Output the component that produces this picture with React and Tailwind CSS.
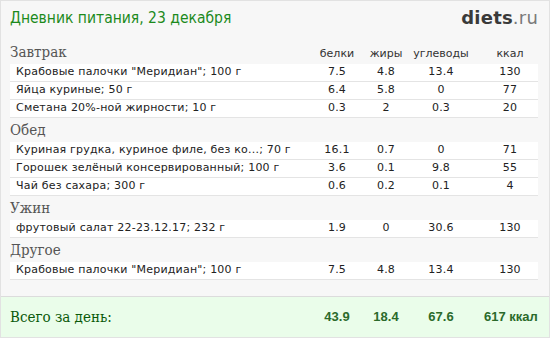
import React from 'react';

const sections = [
  {
    title: 'Завтрак',
    items: [
      ['Крабовые палочки "Меридиан"; 100 г', '7.5', '4.8', '13.4', '130'],
      ['Яйца куриные; 50 г', '6.4', '5.8', '0', '77'],
      ['Сметана 20%-ной жирности; 10 г', '0.3', '2', '0.3', '20'],
    ],
  },
  {
    title: 'Обед',
    items: [
      ['Куриная грудка, куриное филе, без ко...; 70 г', '16.1', '0.7', '0', '71'],
      ['Горошек зелёный консервированный; 100 г', '3.6', '0.1', '9.8', '55'],
      ['Чай без сахара; 300 г', '0.6', '0.2', '0.1', '4'],
    ],
  },
  {
    title: 'Ужин',
    items: [['фрутовый салат 22-23.12.17; 232 г', '1.9', '0', '30.6', '130']],
  },
  {
    title: 'Другое',
    items: [['Крабовые палочки "Меридиан"; 100 г', '7.5', '4.8', '13.4', '130']],
  },
];

const cols = 'grid grid-cols-[1fr_52px_46px_75px_54px]';

const Cells = ({ values }) => (
  <>
    <div className="text-center">{values[0]}</div>
    <div className="text-center">{values[1]}</div>
    <div className="text-center pr-[11px]">{values[2]}</div>
    <div className="text-center pr-[2px]">{values[3]}</div>
  </>
);

export default function App() {
  return (
    <div className="w-[550px] h-[338px] bg-[#f7f7f7] border border-[#e2e2e2] flex flex-col overflow-hidden">
      <div className="h-[39px] flex items-start justify-between pl-[9px] pr-[11px] pt-[6px]">
        <h1 className="text-[15.5px] leading-[22px] text-[#1c8a1c] font-['DejaVu_Sans_Condensed','DejaVu_Sans',sans-serif]">
          Дневник питания, 23 декабря
        </h1>
        <div className="text-[18px] leading-[22px] tracking-[0.2px] font-['DejaVu_Sans',sans-serif]">
          <span className="font-bold text-[#3a3a3a]">diets</span>
          <span className="text-[#7a7a7a]">.ru</span>
        </div>
      </div>

      <div className="pl-[9px] pr-[11px] flex-1">
        {sections.map((s, si) => (
          <div key={s.title}>
            <div className={`${cols} h-[24px] items-end pb-[3px]`}>
              <div className="text-[15px] leading-[18px] text-[#555] font-['DejaVu_Serif_Condensed','DejaVu_Serif',serif]">
                {s.title}
              </div>
              {si === 0 && (
                <div className="contents text-[11px] leading-[15px] text-[#333] font-['DejaVu_Sans',sans-serif]">
                  <div className="text-center text-[11px] leading-[15px] text-[#333] font-['DejaVu_Sans',sans-serif]">белки</div>
                  <div className="text-center text-[11px] leading-[15px] text-[#333] font-['DejaVu_Sans',sans-serif]">жиры</div>
                  <div className="text-center pr-[11px] text-[11px] leading-[15px] text-[#333] font-['DejaVu_Sans',sans-serif]">углеводы</div>
                  <div className="text-center pr-[2px] text-[11px] leading-[15px] text-[#333] font-['DejaVu_Sans',sans-serif]">ккал</div>
                </div>
              )}
            </div>
            {s.items.map((it, i) => (
              <div
                key={i}
                className={`${cols} h-[18px] items-center bg-white border-b border-[#e4e4e4] text-[11px] tracking-[0.2px] text-[#222] font-['DejaVu_Sans',sans-serif]`}
              >
                <div className="pl-[6px] whitespace-nowrap overflow-hidden">{it[0]}</div>
                <Cells values={it.slice(1)} />
              </div>
            ))}
          </div>
        ))}
      </div>

      <div className="h-[41px] bg-[#eafdea] border-t border-[#dcdcdc] pl-[9px] pr-[11px] grid grid-cols-[1fr_52px_46px_75px_54px] items-center">
        <div className="text-[15px] text-[#0b5a0b] font-['DejaVu_Serif_Condensed','DejaVu_Serif',serif]">Всего за день:</div>
        <div className="text-center font-bold text-[13px] text-[#2b6a2b] font-['Liberation_Sans',sans-serif]">43.9</div>
        <div className="text-center font-bold text-[13px] text-[#2b6a2b] font-['Liberation_Sans',sans-serif]">18.4</div>
        <div className="text-center font-bold text-[13px] text-[#2b6a2b] font-['Liberation_Sans',sans-serif] pr-[11px]">67.6</div>
        <div className="text-center font-bold text-[13px] text-[#2b6a2b] font-['Liberation_Sans',sans-serif] whitespace-nowrap pr-[12px]">617 ккал</div>
      </div>
    </div>
  );
}
